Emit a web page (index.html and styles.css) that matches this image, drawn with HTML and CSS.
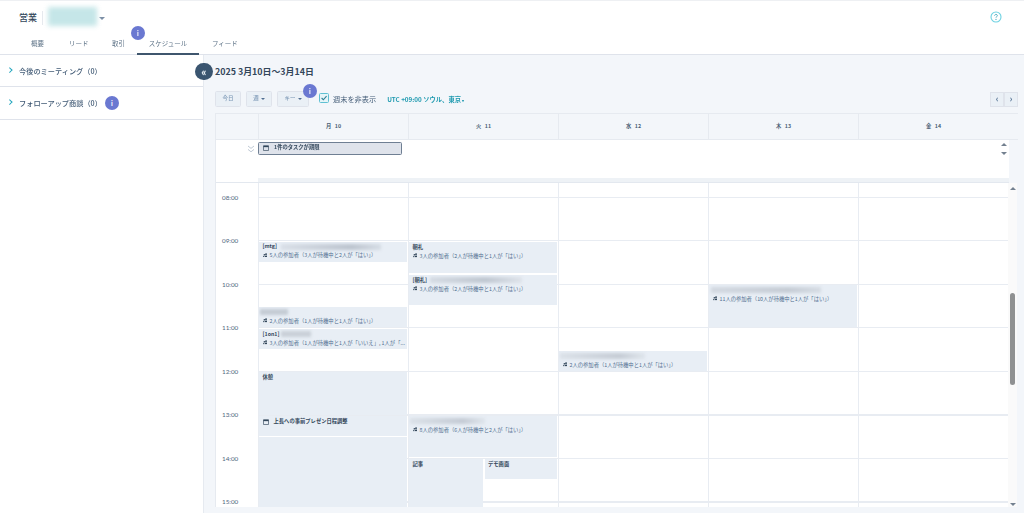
FILE: index.html
```html
<!DOCTYPE html>
<html lang="ja">
<head>
<meta charset="utf-8">
<title>スケジュール</title>
<link rel="stylesheet" href="styles.css">
</head>
<body>
<svg class="defs" width="0" height="0" aria-hidden="true">
  <symbol id="people" viewBox="0 0 10 10"><circle cx="6.8" cy="2.6" r="2.1"/><path d="M3.6 9.4c0-2.6 1.3-4 3.2-4s3 1.4 3 4z"/><circle cx="3" cy="4" r="1.7"/><path d="M0 9.4c0-2 1-3.4 2.6-3.4.3 0 .5 0 .7.1-.6.8-.8 2-.8 3.3z"/></symbol>
  <symbol id="cal" viewBox="0 0 12 12"><path d="M1 1.5h10v9.5H1z" fill="none" stroke="#33475b" stroke-width="1.3"/><path d="M1 1.5h10v2.8H1z" fill="#33475b"/></symbol>
</svg>
<div class="page">
  <header class="top">
    <div class="titlebar">
      <span class="app">営業</span>
      <span class="sep"></span>
      <span class="owner"></span>
      <span class="caret"></span>
      <svg class="help" viewBox="0 0 12 12"><circle cx="6" cy="6" r="5" fill="none" stroke="#6fd2e2" stroke-width="1.1"/><path d="M4.6 4.8c0-1 .7-1.4 1.4-1.4s1.4.5 1.4 1.2c0 1-1.4 1-1.4 2.1" fill="none" stroke="#4aa9bd" stroke-width=".9"/><circle cx="6" cy="8.4" r=".6" fill="#4aa9bd"/></svg>
    </div>
    <nav class="tabs">
      <a class="tab t1">概要</a>
      <a class="tab t2">リード</a>
      <a class="tab t3">取引</a>
      <a class="tab t4 active">スケジュール</a>
      <a class="tab t5">フィード</a>
      <span class="badge b-tab">i</span>
    </nav>
  </header>
  <div class="body">
    <aside class="side">
      <div class="acc acc1"><span class="chev"></span>今後のミーティング（0）</div>
      <div class="acc acc2"><span class="chev"></span>フォローアップ商談（0）<span class="badge b-side">i</span></div>
      <button class="collapse">«</button>
    </aside>
    <main class="main">
      <h1 class="range">2025 3月10日〜3月14日</h1>
      <div class="toolbar">
        <button class="btn b-today">今日</button>
        <button class="btn b-week">週<i></i></button>
        <button class="btn b-key">キー<i></i><span class="badge b-tool">i</span></button>
        <span class="check"><svg viewBox="0 0 10 10"><path d="M2 5l2.2 2.2L8.2 2.8" fill="none" stroke="#2f7f95" stroke-width="1.4"/></svg></span>
        <span class="weekend">週末を非表示</span>
        <span class="tz">UTC +09:00 ソウル、東京 <b>▾</b></span>
        <span class="pager"><button class="pg">‹</button><button class="pg">›</button></span>
      </div>
      <section class="cal">
        <div class="head">
          <div class="hd-gut"></div>
          <div class="hd">月 &nbsp; 10</div>
          <div class="hd">火 &nbsp; 11</div>
          <div class="hd">水 &nbsp; 12</div>
          <div class="hd">木 &nbsp; 13</div>
          <div class="hd">金 &nbsp; 14</div>
        </div>
        <div class="allday">
          <div class="ad-gut"><svg viewBox="0 0 8 8"><path d="M1 1l3 2.4L7 1M1 4.4l3 2.4 3-2.4" fill="none" stroke="#b8c3d0" stroke-width=".9"/></svg></div>
          <div class="ad-main">
            <div class="task"><svg class="ic-cal"><use href="#cal"/></svg>1件のタスクが期限</div>
          </div>
          <div class="ad-arrows"><span class="up"></span><span class="down"></span></div>
        </div>
        <div class="grid">
          <div class="times">
            <div class="time">08:00</div><div class="time">09:00</div><div class="time">10:00</div><div class="time">11:00</div><div class="time">12:00</div><div class="time">13:00</div><div class="time">14:00</div><div class="time">15:00</div>
          </div>
          <div class="day">
            <div class="ev" style="top:58.5px;height:20.5px"><div class="ev-t">[mtg]<span class="blur bl-a"></span></div><div class="ev-s"><svg class="ic-p"><use href="#people"/></svg>5人の参加者（3人が待機中と2人が「はい」）</div></div>
            <div class="ev" style="top:124px;height:20px"><div class="ev-t"><span class="blur bl-b"></span></div><div class="ev-s"><svg class="ic-p"><use href="#people"/></svg>2人の参加者（1人が待機中と1人が「はい」）</div></div>
            <div class="ev" style="top:146px;height:20px"><div class="ev-t">[1on1]<span class="blur bl-c"></span></div><div class="ev-s"><svg class="ic-p"><use href="#people"/></svg>3人の参加者（1人が待機中と1人が「いいえ」, 1人が「...</div></div>
            <div class="ev" style="top:189px;height:43px"><div class="ev-t">休憩</div></div>
            <div class="ev" style="top:233px;height:20px"><div class="ev-t"><svg class="ic-c"><use href="#cal"/></svg>上長への事前プレゼン日程調整</div></div>
            <div class="ev" style="top:254px;height:70px"></div>
          </div>
          <div class="day">
            <div class="ev" style="top:59px;height:30.5px"><div class="ev-t">朝礼</div><div class="ev-s"><svg class="ic-p"><use href="#people"/></svg>3人の参加者（2人が待機中と1人が「はい」）</div></div>
            <div class="ev" style="top:92px;height:30px"><div class="ev-t">[朝礼]<span class="blur bl-d"></span></div><div class="ev-s"><svg class="ic-p"><use href="#people"/></svg>3人の参加者（2人が待機中と1人が「はい」）</div></div>
            <div class="ev" style="top:233px;height:41px"><div class="ev-t"><span class="blur bl-e"></span></div><div class="ev-s"><svg class="ic-p"><use href="#people"/></svg>8人の参加者（6人が待機中と2人が「はい」）</div></div>
            <div class="ev ev-left" style="top:276px;height:48px"><div class="ev-t">記事</div></div>
            <div class="ev ev-right" style="top:276px;height:20px"><div class="ev-t">デモ画面</div></div>
          </div>
          <div class="day">
            <div class="ev" style="top:168px;height:20px"><div class="ev-t"><span class="blur bl-f"></span></div><div class="ev-s"><svg class="ic-p"><use href="#people"/></svg>2人の参加者（1人が待機中と1人が「はい」）</div></div>
          </div>
          <div class="day">
            <div class="ev" style="top:102px;height:42px"><div class="ev-t"><span class="blur bl-g"></span></div><div class="ev-s"><svg class="ic-p"><use href="#people"/></svg>11人の参加者（10人が待機中と1人が「はい」）</div></div>
          </div>
          <div class="day"></div>
          <div class="scroll"><span class="up"></span><span class="thumb"></span><span class="down"></span></div>
        </div>
      </section>
    </main>
  </div>
</div>
</body>
</html>
```
FILE: styles.css
```css
* { box-sizing: border-box; }
html, body { margin: 0; height: 513px; overflow: hidden; background: #fff; }
body { font-family: "Noto Sans CJK JP", "Lato", sans-serif; color: #33475b; }
.defs { position: absolute; }
.page { width: 1024px; height: 513px; display: flex; flex-direction: column; filter: blur(.4px); }

.top { height: 55px; border-top: 1px solid #eef0f3; border-bottom: 1px solid #dfe3eb; background: #fff; position: relative; flex: none; }
.titlebar { display: flex; align-items: center; height: 33px; padding: 2px 0 0 19px; }
.app { font-size: 9px; line-height: 12px; width: 23px; font-weight: 500; margin-top: -2px; }
.sep { width: 1px; height: 14px; background: #e6e9ee; margin-top: -2px; }
.owner { width: 49px; height: 19px; margin-left: 5px; margin-top: -4px; background: #c5e6e8; filter: blur(2.5px); }
.caret { margin: 0 0 0 2px; border: 3px solid transparent; border-top: 3.5px solid #7b8ea5; border-bottom: 0; }
.help { width: 12px; height: 12px; margin-left: auto; margin-right: 22px; margin-top: -3px; }

.tabs { display: flex; height: 21px; position: relative; }
.tab { font-size: 6.5px; line-height: 18px; color: #5f7488; position: absolute; top: 0; white-space: nowrap; }
.t1 { left: 31px; } .t2 { left: 69px; } .t3 { left: 112px; } .t5 { left: 212px; }
.t4 { left: 137px; width: 62px; text-align: center; height: 21px; border-bottom: 2px solid #3f566d; }
.badge { display: flex; align-items: center; justify-content: center; position: absolute; width: 14px; height: 14px; border-radius: 50%; background: #6a78d1; color: #fff; font: 700 7px/1 "Lato", sans-serif; }
.b-tab { left: 131px; top: -8px; }

.body { flex: 1; display: flex; min-height: 0; }
.side { width: 204px; flex: none; background: #fff; position: relative; border-right: 1px solid #e6eaf0; }
.acc { display: flex; align-items: center; font-size: 7.2px; color: #425b76; font-weight: 500; padding-left: 8px; position: relative; }
.acc1 { height: 32px; border-bottom: 1px solid #dfe3eb; }
.acc2 { height: 33px; border-bottom: 1px solid #dfe3eb; }
.chev { width: 3.5px; height: 3.5px; border-top: 1.2px solid #22a5bd; border-right: 1.2px solid #22a5bd; transform: rotate(45deg); margin-right: 7.5px; margin-top: -2px; }
.b-side { left: 105px; top: 9px; }
.collapse { position: absolute; left: 195px; top: 7.5px; width: 17.5px; height: 17.5px; border: 0; border-radius: 50%; background: #3a5570; color: #e6edf3; font: 900 11px/15px "Lato", sans-serif; padding: 0; z-index: 2; }

.main { flex: 1; background: #f3f6fa; padding: 10px 6px 0 11px; min-width: 0; }
.range { margin: 0; font-size: 8.9px; line-height: 14px; font-weight: 700; color: #33475b; }
.toolbar { display: flex; align-items: center; height: 16px; margin-top: 12px; position: relative; }
.btn { height: 15.5px; padding: 0; border: 1px solid #dfe3eb; border-radius: 1.5px; background: #eaf0f6; color: #7c98b6; font: 500 5.5px/1 "Noto Sans CJK JP", sans-serif; display: flex; align-items: center; justify-content: center; position: relative; }
.btn i { border: 2px solid transparent; border-top: 2px solid #506e91; border-bottom: 0; margin-left: 2px; }
.b-today { width: 26px; }
.b-week { width: 26px; margin-left: 5px; }
.b-key { width: 32px; margin-left: 5px; }
.b-tool { left: 25px; top: -8px; }
.check { width: 10px; height: 10px; margin-left: 10px; margin-top: -3px; border: 1px solid #5fc0d2; border-radius: 1.5px; background: #e5f5f8; display: flex; }
.check svg { width: 8px; height: 8px; }
.weekend { font-size: 7.2px; margin-left: 4px; color: #425b76; white-space: nowrap; }
.tz { font-size: 6.3px; font-weight: 700; color: #1f9ab0; margin-left: 11px; white-space: nowrap; }
.tz b { font-size: 4px; }
.pager { margin-left: auto; display: flex; height: 15px; }
.pg { width: 14px; height: 15px; padding: 0; border: 1px solid #dfe3eb; background: #eaf0f6; color: #506e91; font: 700 9px/10px "Lato", sans-serif; }

.cal { margin-top: 6px; height: 394px; display: flex; flex-direction: column; border-left: 1px solid #e6eaf0; }
.head { display: flex; height: 27px; flex: none; border-top: 1px solid #e6eaf0; border-bottom: 1px solid #e6eaf0; }
.hd-gut { width: 42px; }
.hd { width: 150px; border-left: 1px solid #e6eaf0; font-size: 5.3px; font-weight: 700; color: #4a5f75; text-align: center; line-height: 25px; }

.allday { display: flex; height: 43px; flex: none; background: #fff; position: relative; border-bottom: 1px solid #e3e8ef; margin-right: 9px; }
.ad-gut { width: 42px; flex: none; display: flex; justify-content: flex-end; padding: 5px 3px 0 0; }
.ad-gut svg { width: 8px; height: 8px; }
.ad-main { flex: 1; position: relative; padding-top: 2px; background: linear-gradient(to bottom, transparent 38px, #eef2f6 38px); }
.task { width: 144px; height: 13px; border: 1px solid #6f7f93; border-radius: 1.5px; background: #dfe3eb; font-size: 5.3px; font-weight: 700; line-height: 9px; padding-left: 4px; display: flex; align-items: flex-start; }
.ic-cal, .ic-c { width: 6px; height: 6px; flex: none; margin-right: 5px; margin-top: 1.5px; }
.ad-arrows { position: absolute; right: 2px; top: 2.5px; display: flex; flex-direction: column; gap: 6.5px; }
.up { display: block; border: 3px solid transparent; border-bottom: 3.5px solid #73808f; border-top: 0; }
.down { display: block; border: 3px solid transparent; border-top: 3.5px solid #73808f; border-bottom: 0; }

.grid { flex: 1; display: flex; min-height: 0; position: relative; overflow: hidden; }
.times { width: 42px; flex: none; background: #fff; margin-top: -7.5px; }
.time { height: 43.5px; line-height: 43.5px; padding-left: 6px; font-size: 6.3px; color: #4f667e; font-family: "Lato", sans-serif; }
.day { width: 150px; flex: none; position: relative; border-left: 1px solid #e8ecf2; background-color: #fff; background-image: repeating-linear-gradient(to bottom, #e8ecf2 0, #e8ecf2 1px, transparent 1px, transparent 43.5px); background-position: 0 14px; }
.ev { position: absolute; left: 0; right: 1px; background: #e8eef5; padding: 1.5px 0 0 3.5px; overflow: hidden; }
.ev-left { width: 74px; right: auto; }
.ev-right { left: 75.5px; }
.ev-t { display: flex; align-items: center; height: 7px; font-size: 5.3px; line-height: 7px; font-weight: 700; color: #33475b; white-space: nowrap; }
.ev-s { display: flex; align-items: center; height: 8px; margin-top: 1px; font-size: 5.3px; line-height: 8px; color: #516f90; white-space: nowrap; }
.ic-p { width: 4.5px; height: 4.5px; flex: none; margin-right: 2.5px; fill: #33475b; }
.blur { display: block; height: 6px; margin-left: 3px; filter: blur(1.4px); }
.bl-a { width: 100px; background: linear-gradient(90deg, #d9dfe7, #bcc4cf 70%, #d6dde5); margin-left: 4px; }
.bl-b { width: 28px; background: #c4cbd4; margin-left: -3px; }
.bl-c { width: 30px; background: #c9d0d8; margin-left: 2px; }
.bl-d { width: 92px; background: linear-gradient(90deg, #d5dbe3, #bfc7d1 60%, #dee3ea); margin-left: 3px; }
.bl-e { width: 75px; background: linear-gradient(90deg, #dbe1e8, #c4cbd5 70%, #dfe5ec); margin-left: -3px; }
.bl-f { width: 85px; background: linear-gradient(90deg, #dbe1e8, #c5ccd5 70%, #dfe5ec); margin-left: -3px; }
.bl-g { width: 110px; background: linear-gradient(90deg, #d3d9e1, #c5ccd5 70%, #d6dce4); margin-left: -2px; }
.scroll { width: 9px; flex: none; background: #fafafa; position: relative; display: flex; flex-direction: column; align-items: center; justify-content: space-between; padding: 4px 0 1px; }
.thumb { position: absolute; left: 1.5px; top: 110px; width: 5.5px; height: 92px; border-radius: 3px; background: #8f9192; }
```
